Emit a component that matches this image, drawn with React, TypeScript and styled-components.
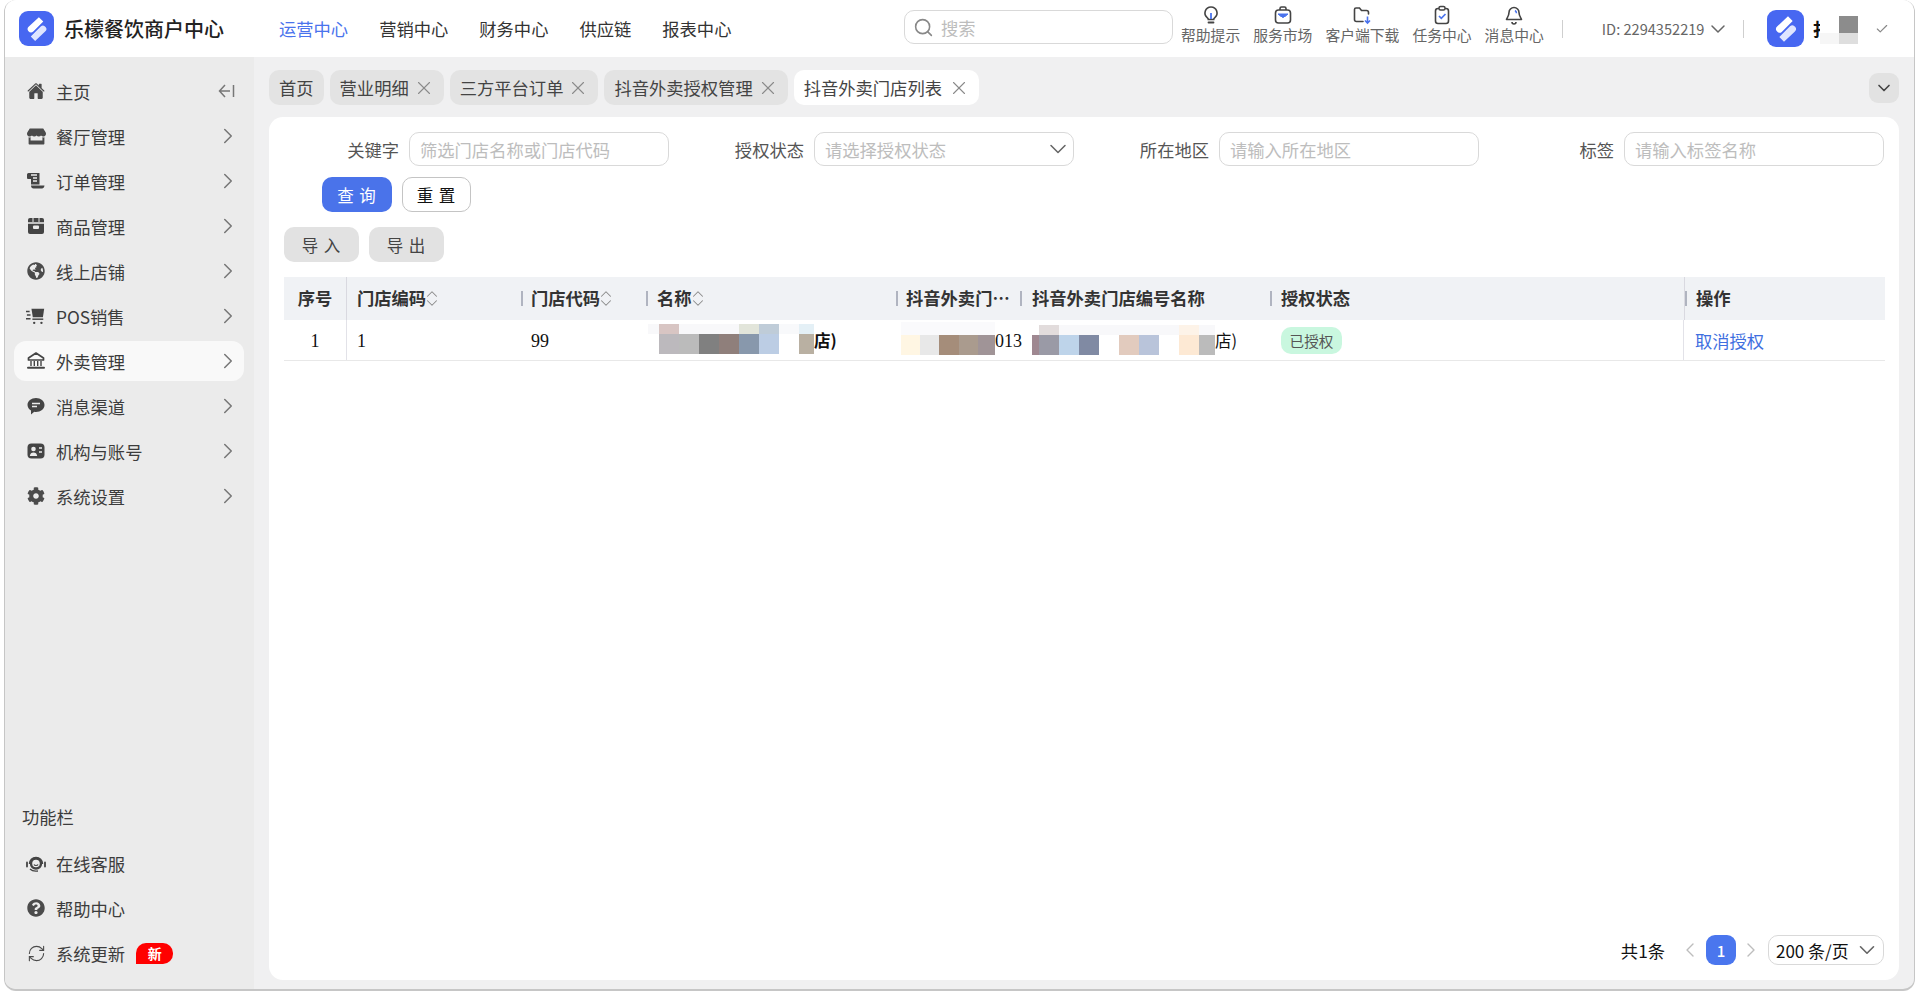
import React from 'react';
import styled, { createGlobalStyle } from 'styled-components';
import { ChevronRight, ChevronDown, ChevronLeft, ChevronUp, X, Search as SearchGlyph, Check, RefreshCw } from 'lucide-react';
import { FaGlobeAmericas, FaCog, FaQuestionCircle, FaStore } from 'react-icons/fa';
import { IoHome } from 'react-icons/io5';

const SANS = `"Noto Sans CJK SC", "Liberation Sans", sans-serif`;
const SERIF = `"Liberation Serif", "Noto Sans CJK SC", serif`;

const Global = createGlobalStyle`
  html, body { margin: 0; padding: 0; background: #fff; font-family: ${SANS}; }
  * { box-sizing: border-box; }
`;

const Page = styled.div`width: 1919px; height: 992px; padding-left: 4px; background: #fff; overflow: hidden;`;
const Win = styled.div`
  width: 1911px; height: 991px; display: flex; flex-direction: column; overflow: hidden;
  border: 1px solid #c6c6c6; border-top: none; border-bottom-width: 2px; border-radius: 12px; background: #f0f0f1;
`;
const Top = styled.header`height: 57px; flex: none; background: #fff; display: flex; align-items: center; padding-left: 14px;`;
const LogoBox = styled.div<{ $h?: number }>`
  width: ${p => p.$h ?? 35}px; height: ${p => p.$h ?? 35}px; border-radius: 9px; background: #4767f1; flex: none;
  display: flex; align-items: center; justify-content: center;
`;
const Brand = styled.div`font-size: 20px; font-weight: 500; color: #222; margin-left: 10px; white-space: nowrap; width: 160px;`;
const Nav = styled.nav`display: flex; gap: 31px; margin-left: 55px; width: 453px;`;
const NavItem = styled.a<{ $on?: boolean }>`font-size: 17.3px; color: ${p => (p.$on ? '#4a73ed' : '#333')}; white-space: nowrap;`;
const SearchBox = styled.div`
  margin: -3px 0 0 172px; width: 269px; height: 34px; border: 1px solid #d9d9d9; border-radius: 10px;
  display: flex; align-items: center; padding-left: 8px; gap: 7px; color: #888; flex: none;
`;
const Ph = styled.span`font-size: 17.3px; color: #bdbdbd; white-space: nowrap;`;
const Tools = styled.div`display: flex; gap: 13px; margin-left: 8px;`;
const Tool = styled.div`display: flex; flex-direction: column; align-items: center; padding-top: 1px; height: 50px;`;
const ToolText = styled.span`font-size: 14.8px; line-height: 19px; color: #666; white-space: nowrap;`;
const Sep = styled.i<{ $l: number }>`display: block; width: 1px; height: 18px; background: #cfcfcf; margin-left: ${p => p.$l}px; flex: none;`;
const IdText = styled.span`font-size: 14.6px; color: #666; margin-left: 39px; white-space: nowrap; display: flex; align-items: center; gap: 2px;`;
const IdArrow = styled.span`display: flex; margin-right: -6px;`;
const UserWrap = styled.div`display: flex; align-items: center; margin-left: 23px;`;
const NameGlyph = styled.span`font-size: 17px; font-weight: 700; color: #111; margin-left: 8px; white-space: nowrap; line-height: 24px;`;
const UserBlur = styled.div`display: grid; grid-template-columns: 19px 19px; grid-template-rows: 17px 11px; margin: 2px 0 0 -9px;`;
const BlurCell = styled.i<{ $c: string }>`background: ${p => p.$c}; display: block;`;
const CheckWrap = styled.span`margin-left: 17px; color: #888; display: flex;`;

const Body = styled.div`flex: 1; display: flex; min-height: 0;`;
const Side = styled.aside`width: 249px; flex: none; background: #ebebeb; padding: 14px 10px 11px 9px; display: flex; flex-direction: column;`;
const SideItem = styled.div<{ $on?: boolean }>`
  height: 40px; margin-bottom: 5px; flex: none; display: flex; align-items: center; border-radius: 12px; padding: 0 12px;
  background: ${p => (p.$on ? '#f9f9f9' : 'transparent')}; color: #4b4b4b;
`;
const IconSlot = styled.span`width: 20px; height: 20px; display: flex; align-items: center; justify-content: center; flex: none; color: #4b4b4b;`;
const SideText = styled.span`margin-left: 10px; font-size: 17.3px; color: #3c3c3c; white-space: nowrap;`;
const Arrow = styled.span`margin-left: auto; margin-right: -9px; color: #777; display: flex;`;
const CollapseSlot = styled.span`margin-left: auto; margin-right: -3px; display: flex;`;
const SideBottom = styled.div`margin-top: auto; display: flex; flex-direction: column;`;
const SideTitle = styled.div`font-size: 17.3px; color: #3c3c3c; padding-left: 8px; height: 40px; line-height: 40px; margin-bottom: 6px;`;
const NewBadge = styled.span`
  margin-left: 11px; width: 37px; height: 21px; background: #f00; color: #fff; font-size: 14px; font-weight: 700;
  text-align: center; line-height: 21px; border-radius: 10px 10px 10px 0;
`;

const Main = styled.main`flex: 1; min-width: 0; padding: 13px 15px 9px; display: flex; flex-direction: column; gap: 12px;`;
const TabsRow = styled.div`display: flex; align-items: center; height: 35px; gap: 6px; flex: none;`;
const Tab = styled.div<{ $on?: boolean }>`
  height: 35px; border-radius: 10px; padding: 0 10px; display: flex; align-items: center; gap: ${p => (p.$on ? 11 : 9)}px;
  background: ${p => (p.$on ? '#fff' : '#e3e3e3')}; font-size: 17.3px; color: #444; white-space: nowrap;
`;
const TabX = styled.span`color: #8a8a8a; display: flex; margin: 0 -1px 0 -5px; width: 22px; height: 22px;`;
const Collapse = styled.div`
  margin-left: auto; width: 30px; height: 30px; border-radius: 9px; background: #e2e2e2; color: #444;
  display: flex; align-items: center; justify-content: center;
`;
const Card = styled.section`flex: 1; background: #fff; border-radius: 14px; padding: 15px 14px 15px 15px; display: flex; flex-direction: column; min-height: 0;`;
const FormGrid = styled.div`display: grid; grid-template-columns: 385px 405px 405px 405px;`;
const FormItem = styled.label`display: flex; justify-content: flex-end; align-items: center; gap: 10px;`;
const FormLabel = styled.span`font-size: 17.3px; color: #555; white-space: nowrap;`;
const Field = styled.div`
  width: 260px; height: 34px; border: 1px solid #d9d9d9; border-radius: 10px; padding: 0 10px;
  display: flex; align-items: center; justify-content: space-between; color: #666;
`;
const FieldArrow = styled.span`display: flex; margin-right: -9px;`;
const QueryRow = styled.div`display: flex; gap: 10px; padding-left: 38px; margin-top: 11px;`;
const Btn = styled.button<{ $kind: 'primary' | 'plain' | 'gray' }>`
  height: 35px; width: ${p => (p.$kind === 'gray' ? 75 : p.$kind === 'plain' ? 69 : 70)}px; border-radius: 10px; font-family: ${SANS}; font-size: 16.5px; padding: 0;
  letter-spacing: 1px; cursor: pointer;
  border: ${p => (p.$kind === 'plain' ? '1px solid #c4c4c4' : 'none')};
  background: ${p => (p.$kind === 'primary' ? '#4a73ea' : p.$kind === 'gray' ? '#e2e2e2' : '#fff')};
  color: ${p => (p.$kind === 'primary' ? '#fff' : p.$kind === 'gray' ? '#444' : '#111')};
`;
const ActionRow = styled.div`display: flex; gap: 10px; margin-top: 15px;`;

const COLS = '63px 174px 125px 250px 124px 250px 414px 200px';
const TableWrap = styled.div`margin-top: 15px;`;
const HeadRow = styled.div`display: grid; grid-template-columns: ${COLS}; height: 43px; background: #f0f2f5;`;
const DataRow = styled.div`display: grid; grid-template-columns: ${COLS}; height: 41px; border-bottom: 1px solid #e8e8e8; font-family: ${SERIF}; font-size: 18px; color: #111;`;
const HeadCell = styled.div<{ $tick?: boolean; $line?: boolean; $center?: boolean; $pad?: number }>`
  position: relative; display: flex; align-items: center; min-width: 0; font-size: 17.3px; font-weight: 700; color: #333;
  padding: 0 7px 2px ${p => p.$pad ?? 11}px;
  justify-content: ${p => (p.$center ? 'center' : 'flex-start')};
  ${p => (p.$center ? 'padding: 0 0 2px;' : '')}
  ${p => (p.$line ? 'border-right: 1px solid #d9d9e0;' : '')}
  ${p => p.$tick ? `&::before { content: ''; position: absolute; left: 0; top: 14px; width: 2px; height: 15px; background: #b0b4c0; }` : ''}
`;
const HeadText = styled.span`white-space: nowrap;`;
const Sort = styled.span`display: flex; flex-direction: column; color: #8a8a8a; margin: 2px -4px 0 -3px; flex: none;`;
const SortPart = styled.span<{ $up?: boolean }>`display: flex; flex: none; height: 18px; margin-bottom: ${p => (p.$up ? -9 : 0)}px;`;
const Cell = styled.div<{ $center?: boolean; $line?: boolean; $pad?: number }>`
  display: flex; align-items: center; min-width: 0; padding-left: ${p => p.$pad ?? 11}px;
  ${p => (p.$center ? 'justify-content: center; padding-left: 0;' : '')}
  ${p => (p.$line ? 'border-right: 1px solid #e2e2e8;' : '')}
`;
const Digits = styled.span`padding-top: 3px; white-space: nowrap;`;
const MosaicBox = styled.div<{ $top: number }>`display: flex; flex-direction: column; align-self: flex-start; margin-top: ${p => p.$top}px; flex: none;`;
const MosaicRow = styled.div<{ $h: number }>`display: flex; height: ${p => p.$h}px;`;
const MosaicCell = styled.i<{ $w: number; $c: string }>`display: block; width: ${p => p.$w}px; background: ${p => p.$c};`;
const StrongText = styled.span`font-family: ${SANS}; font-weight: 700; font-size: 16.5px; white-space: nowrap;`;
const CjkText = styled.span`font-family: ${SANS}; font-size: 16.5px; white-space: nowrap;`;
const StatusTag = styled.span`
  width: 61px; height: 27px; border-radius: 10px; background: #c9f7df; color: #555; font-family: ${SANS};
  font-size: 14.6px; display: flex; align-items: center; justify-content: center;
`;
const LinkText = styled.a`font-family: ${SANS}; font-size: 17.3px; color: #3f6fe0;`;
const Pager = styled.div`margin-top: auto; display: flex; align-items: center; justify-content: flex-end; height: 30px; padding-right: 1px;`;
const Total = styled.span`font-size: 17.3px; color: #111; margin-right: 13px; white-space: nowrap;`;
const PageArrow = styled.span`color: #bdbdbd; display: flex;`;
const PageNum = styled.span`
  width: 30px; height: 30px; border-radius: 9px; background: #4a76ee; color: #fff; font-size: 15px; font-weight: 500;
  display: flex; align-items: center; justify-content: center; margin: 0 3px 0 4px;
`;
const PageSize = styled.div`
  width: 116px; height: 30px; margin-left: 5px; border: 1px solid #d9d9d9; border-radius: 10px; padding: 0 3px 0 7px;
  display: flex; align-items: center; justify-content: space-between; font-size: 17px; color: #111; white-space: nowrap;
`;

const Logo = ({ s = 30 }: { s?: number }) => (
  <svg width={s} height={s} viewBox="0 0 24 24">
    <path d="M13.500 2.500 L17 6 L9 14 Q7 16 5 13.500 Q3.600 11.700 5.500 10 Z" fill="#fff" />
    <path d="M15 10 Q17 8 19 10.500 Q20.400 12.300 18.500 14 L10.500 21.500 L7 18 Z" fill="#dfe5ff" />
  </svg>
);
const Ic = ({ children, s = 20 }: { children: React.ReactNode; s?: number }) => (
  <svg width={s} height={s} viewBox="0 0 20 20" fill="none">{children}</svg>
);
const D = '#444';
const B = '#4a73ed';
const BulbI = () => (
  <Ic><path d="M10 2a6 6 0 0 0-3.600 10.800c.6.5.9 1 .9 1.700h5.400c0-.7.3-1.200.9-1.700A6 6 0 0 0 10 2Z" stroke={D} strokeWidth="1.600" /><path d="M7.500 17.500h5" stroke={D} strokeWidth="1.800" strokeLinecap="round" /><path d="M10 8v6" stroke={B} strokeWidth="1.800" /></Ic>
);
const BagI = () => (
  <Ic><rect x="2.500" y="5" width="15" height="13" rx="3" stroke={D} strokeWidth="1.600" /><path d="M7 5V3.500A1.500 1.500 0 0 1 8.500 2h3A1.500 1.500 0 0 1 13 3.500V5" stroke={D} strokeWidth="1.600" /><path d="M5 9h10l-3 2.500h-4Z" fill={B} stroke={B} strokeWidth="1" /><path d="M10 11v2" stroke={B} strokeWidth="1.600" /></Ic>
);
const FolderI = () => (
  <Ic><path d="M11 16.500H4.500A2 2 0 0 1 2.500 14.500V4.500A1.500 1.500 0 0 1 4 3h3.500l2 2.500h5A2 2 0 0 1 16.500 7.500V9" stroke={D} strokeWidth="1.600" strokeLinecap="round" /><path d="M15.500 11.500v6M13 15.500l2.500 2.500 2.500-2.500" stroke={B} strokeWidth="1.600" /></Ic>
);
const ClipI = () => (
  <Ic><rect x="3.500" y="3.500" width="13" height="15" rx="2.500" stroke={D} strokeWidth="1.600" /><rect x="7" y="1.500" width="6" height="3.500" rx="1.500" fill="#fff" stroke={D} strokeWidth="1.500" /><path d="m7 11 2.300 2.300L13.500 9" stroke={B} strokeWidth="1.700" /></Ic>
);
const BellI = () => (
  <Ic><path d="M10 2.500a5 5 0 0 0-5 5c0 4-2.500 6-2.500 7h15c0-1-2.500-3-2.500-7a5 5 0 0 0-5-5Z" stroke={D} strokeWidth="1.600" strokeLinejoin="round" /><path d="M8 17a2 2 0 0 0 4 0" stroke={D} strokeWidth="1.600" /><path d="M11 5.500c1 .6 1.500 1.500 1.500 2.800" stroke={B} strokeWidth="1.500" /></Ic>
);
const Receipt = () => (
  <Ic><path d="M2.500 2H13.500V13.500H5V8H2A1 1 0 0 1 1 7V3.500A1.500 1.500 0 0 1 2.500 2Z" fill={D} /><path d="M5 4h6M7 7h4M7 10h4" stroke="#ebebeb" strokeWidth="1.400" /><path d="M5 14.500c0 2 1 3 2.500 3H16c1.300 0 2.200-1 2.500-3H8Z" fill={D} /></Ic>
);
const BoxI = () => (
  <Ic><path d="M4 2h12a2 2 0 0 1 2 2v12a2 2 0 0 1-2 2H4a2 2 0 0 1-2-2V4a2 2 0 0 1 2-2Z" fill={D} /><path d="M2 7h16" stroke="#ebebeb" strokeWidth="1.300" /><rect x="7" y="9.500" width="6" height="3.600" rx="1" fill="#ebebeb" /><path d="M7 2v4M13 2v4" stroke="#ebebeb" strokeWidth="1" /></Ic>
);
const CartI = () => (
  <svg width="22" height="20" viewBox="0 0 22 20"><path d="M0 5h4M1 9h4M0 13h5" stroke={D} strokeWidth="1.600" /><path d="M6 2h14l-1.400 9.500H7.500Z" fill={D} /><path d="M7 13.500h12" stroke={D} strokeWidth="1.600" /><circle cx="9" cy="17.500" r="1.300" fill={D} /><circle cx="17" cy="17.500" r="1.300" fill={D} /></svg>
);
const BankI = () => (
  <Ic><path d="M10 2 2.500 7v2h15V7Z" stroke={D} strokeWidth="1.700" strokeLinejoin="round" /><path d="M5 10v5M8.300 10v5M11.700 10v5M15 10v5" stroke={D} strokeWidth="1.400" /><path d="M2 16.800h16" stroke={D} strokeWidth="2" strokeLinecap="round" /></Ic>
);
const ChatI = () => (
  <Ic><path d="M10 2c4.700 0 8.500 3 8.500 7s-3.800 7-8.500 7c-.7 0-1.100 0-1.700-.2L5 18.500v-4A7 7 0 0 1 1.500 9C1.500 5 5.300 2 10 2Z" fill={D} /><path d="M6 7.500h8M6 10.500h5" stroke="#ebebeb" strokeWidth="1.500" /></Ic>
);
const ContactI = () => (
  <Ic><rect x="1.500" y="2.500" width="17" height="15" rx="4" fill={D} /><circle cx="7.500" cy="8" r="2.300" fill="#ebebeb" /><path d="M3.800 15c.3-2.500 1.700-3.500 3.700-3.500s3.400 1 3.700 3.500Z" fill="#ebebeb" /><path d="M13 7h3M13 11h3" stroke="#ebebeb" strokeWidth="1.500" /></Ic>
);
const ServiceI = () => (
  <Ic s={22}><path d="M3.500 11a6.500 6.500 0 0 1 13 0" stroke={D} strokeWidth="1.500" /><circle cx="10" cy="10.500" r="5" stroke={D} strokeWidth="2.400" /><path d="M8 11.500c.6 1.300 3.400 1.300 4 0" stroke={D} strokeWidth="1.200" /><path d="M1 9.500v4M19 9.500v4" stroke={D} strokeWidth="1.800" strokeLinecap="round" /><path d="M4 16c2 2 5 2.500 8 2" stroke={D} strokeWidth="1.300" /></Ic>
);
const CollapseI = () => (
  <svg width="17" height="14" viewBox="0 0 17 14" fill="none"><path d="M7 1 1.500 7 7 13M1.500 7H12M15.500 1v12" stroke="#777" strokeWidth="1.500" /></svg>
);
const SortI = () => (
  <Sort>
    <SortPart $up><ChevronUp size={18} strokeWidth={1.4} /></SortPart>
    <SortPart><ChevronDown size={18} strokeWidth={1.4} /></SortPart>
  </Sort>
);
const TabClose = () => <TabX><X size={22} strokeWidth={1.2} /></TabX>;

const Mosaic = ({ top, h1, h2, up, down }: { top: number; h1: number; h2: number; up: [number, string][]; down: [number, string][] }) => (
  <MosaicBox $top={top}>
    <MosaicRow $h={h1}>{up.map(([w, c], i) => <MosaicCell key={i} $w={w} $c={c} />)}</MosaicRow>
    <MosaicRow $h={h2}>{down.map(([w, c], i) => <MosaicCell key={i} $w={w} $c={c} />)}</MosaicRow>
  </MosaicBox>
);

const menu: [React.ReactNode, string][] = [
  [<FaStore size={19} />, '餐厅管理'],
  [<Receipt />, '订单管理'],
  [<BoxI />, '商品管理'],
  [<FaGlobeAmericas size={18} />, '线上店铺'],
  [<CartI />, 'POS销售'],
  [<BankI />, '外卖管理'],
  [<ChatI />, '消息渠道'],
  [<ContactI />, '机构与账号'],
  [<FaCog size={18} />, '系统设置'],
];
const tabs = ['营业明细', '三方平台订单', '抖音外卖授权管理'];
const tools: [React.ReactNode, string][] = [
  [<BulbI />, '帮助提示'], [<BagI />, '服务市场'], [<FolderI />, '客户端下载'], [<ClipI />, '任务中心'], [<BellI />, '消息中心'],
];

export default function App() {
  return (
    <Page>
      <Global />
      <Win>
        <Top>
          <LogoBox><Logo /></LogoBox>
          <Brand>乐檬餐饮商户中心</Brand>
          <Nav>
            <NavItem $on>运营中心</NavItem>
            <NavItem>营销中心</NavItem>
            <NavItem>财务中心</NavItem>
            <NavItem>供应链</NavItem>
            <NavItem>报表中心</NavItem>
          </Nav>
          <SearchBox><SearchGlyph size={21} strokeWidth={1.8} /><Ph>搜索</Ph></SearchBox>
          <Tools>
            {tools.map(([icon, t]) => <Tool key={t}>{icon}<ToolText>{t}</ToolText></Tool>)}
          </Tools>
          <Sep $l={18} />
          <IdText>ID: 2294352219 <IdArrow><ChevronDown size={24} strokeWidth={1.5} /></IdArrow></IdText>
          <Sep $l={19} />
          <UserWrap>
            <LogoBox $h={37}><Logo s={32} /></LogoBox>
            <NameGlyph>扌</NameGlyph>
            <UserBlur>
              <BlurCell $c="#fff" /><BlurCell $c="#8c8c8c" />
              <BlurCell $c="#f6f6f6" /><BlurCell $c="#dedede" />
            </UserBlur>
            <CheckWrap><Check size={14} strokeWidth={2} /></CheckWrap>
          </UserWrap>
        </Top>
        <Body>
          <Side>
            <SideItem>
              <IconSlot><IoHome size={18} /></IconSlot>
              <SideText>主页</SideText>
              <CollapseSlot><CollapseI /></CollapseSlot>
            </SideItem>
            {menu.map(([icon, t]) => (
              <SideItem key={t} $on={t === '外卖管理'}>
                <IconSlot>{icon}</IconSlot>
                <SideText>{t}</SideText>
                <Arrow><ChevronRight size={26} strokeWidth={1.4} /></Arrow>
              </SideItem>
            ))}
            <SideBottom>
              <SideTitle>功能栏</SideTitle>
              <SideItem><IconSlot><ServiceI /></IconSlot><SideText>在线客服</SideText></SideItem>
              <SideItem><IconSlot><FaQuestionCircle size={18} /></IconSlot><SideText>帮助中心</SideText></SideItem>
              <SideItem>
                <IconSlot><RefreshCw size={19} strokeWidth={1.4} /></IconSlot>
                <SideText>系统更新</SideText>
                <NewBadge>新</NewBadge>
              </SideItem>
            </SideBottom>
          </Side>
          <Main>
            <TabsRow>
              <Tab>首页</Tab>
              {tabs.map(t => <Tab key={t}>{t}<TabClose /></Tab>)}
              <Tab $on>抖音外卖门店列表<TabClose /></Tab>
              <Collapse><ChevronDown size={20} strokeWidth={2} /></Collapse>
            </TabsRow>
            <Card>
              <FormGrid>
                <FormItem><FormLabel>关键字</FormLabel><Field><Ph>筛选门店名称或门店代码</Ph></Field></FormItem>
                <FormItem><FormLabel>授权状态</FormLabel><Field><Ph>请选择授权状态</Ph><FieldArrow><ChevronDown size={28} strokeWidth={1.3} /></FieldArrow></Field></FormItem>
                <FormItem><FormLabel>所在地区</FormLabel><Field><Ph>请输入所在地区</Ph></Field></FormItem>
                <FormItem><FormLabel>标签</FormLabel><Field><Ph>请输入标签名称</Ph></Field></FormItem>
              </FormGrid>
              <QueryRow>
                <Btn $kind="primary">查 询</Btn>
                <Btn $kind="plain">重 置</Btn>
              </QueryRow>
              <ActionRow>
                <Btn $kind="gray">导 入</Btn>
                <Btn $kind="gray">导 出</Btn>
              </ActionRow>
              <TableWrap>
                <HeadRow>
                  <HeadCell $center $line>序号</HeadCell>
                  <HeadCell $pad={10}><HeadText>门店编码</HeadText><SortI /></HeadCell>
                  <HeadCell $tick $pad={10}><HeadText>门店代码</HeadText><SortI /></HeadCell>
                  <HeadCell $tick $pad={11}><HeadText>名称</HeadText><SortI /></HeadCell>
                  <HeadCell $tick $pad={10}><HeadText>抖音外卖门…</HeadText></HeadCell>
                  <HeadCell $tick $pad={12}><HeadText>抖音外卖门店编号名称</HeadText></HeadCell>
                  <HeadCell $tick $pad={11}><HeadText>授权状态</HeadText></HeadCell>
                  <HeadCell $tick $pad={11} style={{ borderLeft: '1px solid #d9d9e0' }}><HeadText>操作</HeadText></HeadCell>
                </HeadRow>
                <DataRow>
                  <Cell $center $line><Digits>1</Digits></Cell>
                  <Cell $pad={10}><Digits>1</Digits></Cell>
                  <Cell $pad={10}><Digits>99</Digits></Cell>
                  <Cell $pad={2}>
                    <Mosaic
                      top={4} h1={10} h2={20}
                      up={[[11, '#f8f8fa'], [20, '#d8c5c3'], [20, '#f8f8fa'], [20, '#f8f8fa'], [20, '#f8f8fa'], [20, '#e2e5da'], [20, '#bfccd8'], [20, '#f8f9fb'], [15, '#e4f0f6']]}
                      down={[[11, '#fff'], [20, '#bcb9bd'], [20, '#bbbbbb'], [20, '#808080'], [20, '#8f7f7b'], [20, '#8898ac'], [20, '#bccde4'], [20, '#fff'], [15, '#b9b0a2']]}
                    />
                    <StrongText>店)</StrongText>
                  </Cell>
                  <Cell $pad={5}>
                    <Mosaic
                      top={2} h1={13} h2={20}
                      up={[[94, '#fafafc']]}
                      down={[[19, '#fff6e3'], [19, '#e8e8e8'], [20, '#a58d7a'], [19, '#aa9b8e'], [17, '#a09497']]}
                    />
                    <Digits>013</Digits>
                  </Cell>
                  <Cell $pad={12}>
                    <Mosaic
                      top={5} h1={10} h2={20}
                      up={[[7, '#fff'], [20, '#e2dcdc'], [120, '#f8f8fa'], [20, '#fdf3e8'], [16, '#f8f8fa']]}
                      down={[[7, '#9f8891'], [20, '#9a9aa6'], [20, '#bed4ea'], [20, '#808aa3'], [20, '#fff'], [20, '#e2cbbe'], [20, '#b9c4da'], [20, '#fff'], [20, '#fde9d4'], [16, '#bbbbbb']]}
                    />
                    <CjkText>店)</CjkText>
                  </Cell>
                  <Cell $line $pad={11}><StatusTag>已授权</StatusTag></Cell>
                  <Cell $pad={11}><LinkText>取消授权</LinkText></Cell>
                </DataRow>
              </TableWrap>
              <Pager>
                <Total>共1条</Total>
                <PageArrow><ChevronLeft size={24} strokeWidth={1.4} /></PageArrow>
                <PageNum>1</PageNum>
                <PageArrow><ChevronRight size={24} strokeWidth={1.4} /></PageArrow>
                <PageSize>200 条/页<ChevronDown size={26} strokeWidth={1.5} color="#666" /></PageSize>
              </Pager>
            </Card>
          </Main>
        </Body>
      </Win>
    </Page>
  );
}
